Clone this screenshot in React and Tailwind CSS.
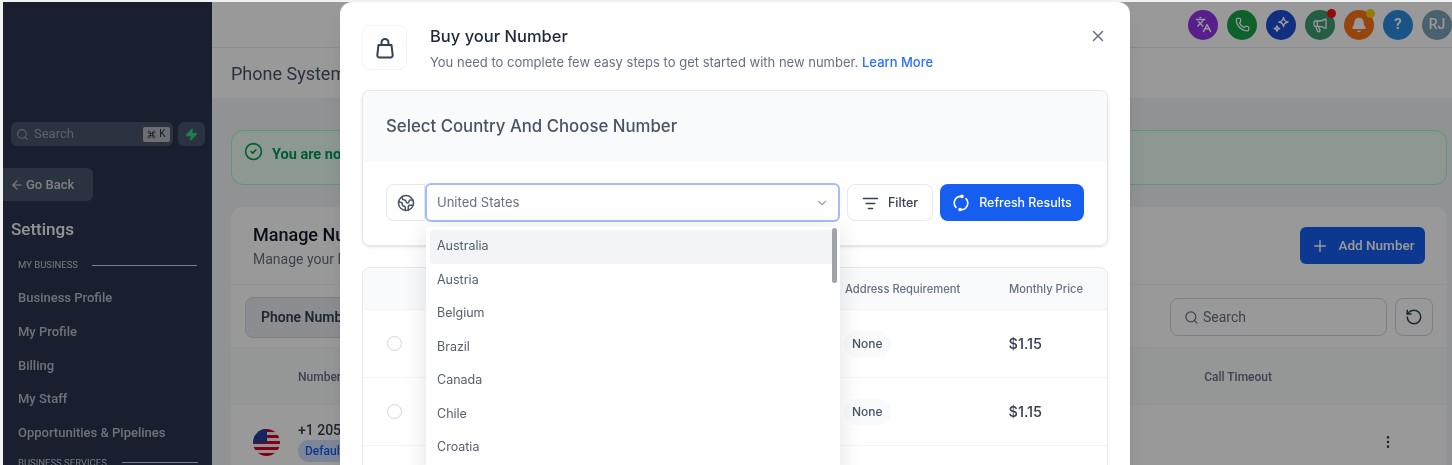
import {
  ArrowLeft,
  Bell,
  ChevronDown,
  CircleCheck,
  Command,
  EllipsisVertical,
  Earth,
  Languages,
  ListFilter,
  Megaphone,
  Phone,
  Plus,
  RotateCcw,
  Search,
  X,
  Zap,
} from "lucide-react";

const menuItems = ["Business Profile", "My Profile", "Billing", "My Staff", "Opportunities & Pipelines"];
const countries = ["Australia", "Austria", "Belgium", "Brazil", "Canada", "Chile", "Croatia"];

const HeaderIcon = ({ className, children, dot }) => (
  <div className={`relative flex h-[30px] w-[30px] items-center justify-center rounded-full text-white ${className}`}>
    {children}
    {dot && <span className={`absolute -right-px -top-px h-[9px] w-[9px] rounded-full ${dot}`} />}
  </div>
);

const Flag = () => (
  <svg width="27" height="27" viewBox="0 0 27 27" className="shrink-0">
    <defs>
      <clipPath id="flag-clip">
        <circle cx="13.5" cy="13.5" r="13.5" />
      </clipPath>
    </defs>
    <g clipPath="url(#flag-clip)">
      <rect width="27" height="27" fill="#f5f5f5" />
      <rect y="0" width="27" height="3" fill="#d80027" />
      <rect y="6" width="27" height="3" fill="#d80027" />
      <rect y="12" width="27" height="3" fill="#d80027" />
      <rect y="18" width="27" height="3" fill="#d80027" />
      <rect y="24" width="27" height="3" fill="#d80027" />
      <rect width="14" height="14" fill="#1f3f9c" />
    </g>
  </svg>
);

const SyncIcon = () => (
  <svg width="18" height="18" viewBox="0 0 18 18" fill="none" stroke="currentColor" strokeWidth="1.6" strokeLinecap="round">
    <path d="M4 13.4A6.6 6.6 0 0 1 9.6 2.4" />
    <path d="M14 4.6A6.6 6.6 0 0 1 8.4 15.6" />
    <circle cx="10" cy="2.4" r="1" fill="currentColor" />
    <circle cx="8" cy="15.6" r="1" fill="currentColor" />
  </svg>
);

const BagIcon = () => (
  <svg width="22" height="24" viewBox="0 0 22 24" fill="none" stroke="currentColor" strokeWidth="2" strokeLinejoin="round" strokeLinecap="round">
    <path d="M4.5 9h13l1.2 10.2a2.2 2.2 0 0 1-2.2 2.3h-11a2.2 2.2 0 0 1-2.2-2.3z" />
    <path d="M7.5 9V6.5a3.5 3.5 0 0 1 7 0V9" />
  </svg>
);

// big star top right, small star bottom left
const TwoStars = () => (
  <svg width="18" height="18" viewBox="0 0 18 18" fill="none" stroke="currentColor" strokeWidth="1.5" strokeLinejoin="round">
    <path d="M11.5 1.5c.4 2.6 1.9 4.1 4.5 4.5-2.6.4-4.1 1.9-4.5 4.5-.4-2.6-1.9-4.1-4.5-4.5 2.6-.4 4.1-1.9 4.5-4.5z" />
    <path d="M5 9.8c.2 1.6 1.1 2.5 2.7 2.7-1.6.2-2.5 1.1-2.7 2.7-.2-1.6-1.1-2.5-2.7-2.7 1.6-.2 2.5-1.1 2.7-2.7z" />
  </svg>
);

const Sidebar = () => (
  <aside className="flex h-full w-[209px] shrink-0 flex-col overflow-hidden bg-[#2b354d] font-[Roboto,sans-serif]">
    <div className="ml-2 mt-[120px] flex h-[24px] shrink-0 items-center gap-[5px]">
      <div className="flex h-full w-[162px] items-center rounded-md bg-[#4a556b] pl-[5px] pr-[3px] text-[13px] text-[#98a2b3]">
        <Search size={13} />
        <span className="ml-[5px] flex-1">Search</span>
        <span className="flex h-[15px] w-[27px] items-center justify-center gap-[3px] rounded-[2px] bg-[#b2b9c3] text-[10px] leading-none text-[#1d2939]">
          <Command size={9} />K
        </span>
      </div>
      <div className="flex h-full w-[27px] items-center justify-center rounded-md bg-[#4a556b]">
        <Zap size={13} className="fill-[#32d583] text-[#32d583]" />
      </div>
    </div>
    <button className="mt-[22px] flex h-[33px] w-[90px] shrink-0 items-center rounded-r-md bg-[#4a556b] pl-[7px] text-[13px] font-medium text-[#d0d5dd]">
      <ArrowLeft size={14} className="mr-[2px]" />
      Go Back
    </button>
    <h2 className="ml-2 mt-[17px] shrink-0 text-[17px] font-medium leading-[22px] text-[#f2f4f7]">Settings</h2>
    <div className="ml-[15px] mr-[15px] mt-[19px] flex shrink-0 items-center text-[9.5px] leading-3 text-[#c4c9d2]">
      MY BUSINESS
      <span className="ml-[14px] h-px flex-1 bg-[#d0d5dd]" />
    </div>
    <nav className="ml-[15px] mt-[17px] flex shrink-0 flex-col gap-[14.2px] text-[13px] font-medium leading-[19.6px] text-[#b8bec9]">
      {menuItems.map((item) => (
        <a key={item}>{item}</a>
      ))}
    </nav>
    <div className="ml-[15px] mr-[14px] mt-[14px] flex shrink-0 items-center text-[9.5px] leading-3 text-[#c4c9d2]">
      BUSINESS SERVICES
      <span className="ml-[15px] h-px flex-1 bg-[#d0d5dd]" />
    </div>
  </aside>
);

const MainContent = () => (
  <main className="flex h-full flex-1 flex-col bg-[#f2f4f7] font-[Roboto,sans-serif]">
    <header className="flex h-[46px] shrink-0 items-center justify-end gap-[9px] border-b border-[#eaecf0] bg-white">
      <HeaderIcon className="bg-[#9333ea]">
        <Languages size={17} />
      </HeaderIcon>
      <HeaderIcon className="bg-[#16a34a]">
        <Phone size={15} />
      </HeaderIcon>
      <HeaderIcon className="bg-[#1d4ed8]">
        <TwoStars />
      </HeaderIcon>
      <HeaderIcon className="bg-[#3f9b70]" dot="bg-[#f31212]">
        <Megaphone size={16} />
      </HeaderIcon>
      <HeaderIcon className="bg-[#f97316]" dot="bg-[#facc15]">
        <Bell size={16} className="fill-white" />
      </HeaderIcon>
      <HeaderIcon className="bg-[#2b8de0]">
        <span className="text-[15px] font-bold">?</span>
      </HeaderIcon>
      <HeaderIcon className="bg-[#7ba3b8]">
        <span className="text-[14px] font-medium">RJ</span>
      </HeaderIcon>
    </header>
    <div className="flex h-[50px] shrink-0 items-center bg-white pl-[19px] text-[18px] text-[#475467]">Phone System</div>
    <div className="flex flex-col pl-[19px] pr-[5px] pt-[32px]">
      <div className="flex h-[55px] items-start rounded-xl border border-[#a6f4c5] bg-[#ecfdf3] pl-[12px] pt-[11px] text-[14.5px] font-bold text-[#039855]">
        <CircleCheck size={19} className="mr-[9px]" />
        <span className="mt-[2px]">You are now</span>
      </div>
      <section className="mt-[22px] rounded-xl bg-white">
        <div className="flex h-[78px] items-center justify-between border-b border-[#f2f4f7] px-[22px]">
          <div>
            <h3 className="text-[18px] font-medium leading-[26px] text-[#101828]">Manage Numbers</h3>
            <p className="text-[14px] leading-[22px] text-[#667085]">Manage your Numbers</p>
          </div>
          <button className="flex h-[37px] w-[125px] items-center justify-center gap-[10px] rounded-md bg-[#155eef] text-[13.5px] font-medium text-white">
            <Plus size={18} />
            Add Number
          </button>
        </div>
        <div className="flex h-[63px] items-center justify-between border-b border-[#f2f4f7] px-[14px] pt-[2px]">
          <div className="flex h-[41px] w-[200px] items-center rounded-lg border border-[#d0d5dd] bg-[#eaecf0] pl-[15px] text-[14px] font-semibold text-[#344054]">
            Phone Numbers
          </div>
          <div className="flex items-center gap-[8px]">
            <div className="flex h-[38px] w-[217px] items-center gap-[4px] rounded-lg border border-[#d0d5dd] pl-[13px] text-[14px] text-[#667085]">
              <Search size={15} />
              Search
            </div>
            <div className="flex h-[38px] w-[38px] items-center justify-center rounded-lg border border-[#d0d5dd] text-[#344054]">
              <RotateCcw size={18} />
            </div>
          </div>
        </div>
        <div className="flex h-[57px] items-center justify-between border-b border-[#f2f4f7] bg-[#f9fafb] pl-[67px] pr-[175px] pt-[2px] text-[12px] font-medium text-[#667085]">
          <span>Number</span>
          <span>Call Timeout</span>
        </div>
        <div className="flex h-[70px] items-center justify-between pl-[22px] pr-[51px] pt-[4px]">
          <div className="flex items-center gap-[18px]">
            <Flag />
            <div>
              <p className="text-[14px] font-medium leading-4 text-[#344054]">+1 205</p>
              <span className="mt-[1px] inline-block rounded-full bg-[#d1e0ff] px-[7px] text-[12px] font-medium leading-[22px] text-[#155eef]">
                Default
              </span>
            </div>
          </div>
          <EllipsisVertical size={16} className="text-[#344054]" />
        </div>
      </section>
    </div>
  </main>
);

const Row = () => (
  <div className="flex h-[68px] items-center border-b border-[#f2f4f7]">
    <span className="ml-[24px] h-[15px] w-[15px] rounded-full border border-[#d0d5dd]" />
    <span className="ml-[442px] rounded-full bg-[#f9fafb] px-[8px] text-[12px] font-medium leading-[26px] text-[#475467]">None</span>
    <span className="ml-[118px] text-[14.5px] font-medium text-[#344054]">$1.15</span>
  </div>
);

const BuyModal = () => (
  <div className="absolute left-[337px] top-0 h-[520px] w-[790px] rounded-t-xl bg-white px-[22px] pt-[23px] font-[Inter,sans-serif] shadow-xl">
    <div className="relative flex">
      <div className="flex h-[45px] w-[45px] items-center justify-center rounded-lg border border-[#f2f4f7] text-[#344054]">
        <BagIcon />
      </div>
      <div className="ml-[23px]">
        <h2 className="text-[16.5px] font-medium leading-[22px] text-[#1d2939]">Buy your Number</h2>
        <p className="mt-[5px] text-[13px] leading-[20px] text-[#667085]">
          You need to complete few easy steps to get started with new number.{" "}
          <span className="font-medium text-[#2970ff]">Learn More</span>
        </p>
      </div>
      <X size={18} className="absolute right-[1px] top-[2px] text-[#667085]" />
    </div>
    <section className="mt-[18px] rounded-lg border border-[#e4e7ec] shadow-sm">
      <div className="flex h-[71px] items-center rounded-t-lg bg-[#f9fafb] pt-[1px] pl-[23px] text-[16.8px] font-medium text-[#475467]">
        Select Country And Choose Number
      </div>
      <div className="flex h-[83px] items-start pl-[23px] pt-[22px]">
        <div className="flex h-[37px] w-[39px] items-center justify-center rounded-l-lg border border-[#e4e7ec] text-[#475467]">
          <Earth size={18} />
        </div>
        <div className="-mt-px flex h-[39px] w-[415px] items-center justify-between rounded-md border-2 border-[#a4bcfd] pl-[10px] pr-[9px] text-[13px] text-[#667085]">
          United States
          <ChevronDown size={14} className="text-[#98a2b3]" />
        </div>
        <button className="ml-[7px] flex h-[37px] w-[86px] items-center justify-center gap-[9px] rounded-lg border border-[#e4e7ec] pt-px text-[12.5px] font-medium text-[#344054]">
          <ListFilter size={17} />
          Filter
        </button>
        <button className="ml-[7px] flex h-[37px] w-[144px] items-center justify-center gap-[9px] rounded-lg bg-[#155eef] pt-px text-[12.4px] font-medium text-white">
          <SyncIcon />
          Refresh Results
        </button>
      </div>
    </section>
    <section className="mt-[21px] rounded-lg border border-[#e4e7ec]">
      <div className="flex h-[42px] items-center rounded-t-lg border-b border-[#f2f4f7] bg-[#f9fafb] pt-[2px] text-[11.2px] font-medium text-[#667085]">
        <span className="ml-[482px] w-[164px]">Address Requirement</span>
        <span>Monthly Price</span>
      </div>
      <Row />
      <Row />
      <div className="h-[68px]" />
    </section>
    <div className="absolute left-[86px] top-[225px] h-[260px] w-[414px] rounded-b-lg bg-white px-[4px] pt-[3px] shadow-[0_4px_24px_rgba(16,24,40,0.12)]">
      {countries.map((country, i) => (
        <div
          key={country}
          className={`flex h-[33.5px] items-center rounded-sm pl-[7px] text-[12.5px] text-[#565e6c] ${i === 0 ? "bg-[#f2f4f7]" : ""}`}
        >
          {country}
        </div>
      ))}
      <span className="absolute right-[3px] top-[1px] h-[55px] w-[5px] rounded-full bg-[#a0a3a8]" />
    </div>
  </div>
);

export default function App() {
  return (
    <div className="relative h-[465px] w-[1452px] overflow-hidden bg-[#f0f2f2] pl-[3px] pt-[2px] blur-[0.4px]">
      <div className="relative flex h-full">
        <Sidebar />
        <MainContent />
        <div className="absolute inset-0 bg-black/40" />
        <BuyModal />
      </div>
    </div>
  );
}
